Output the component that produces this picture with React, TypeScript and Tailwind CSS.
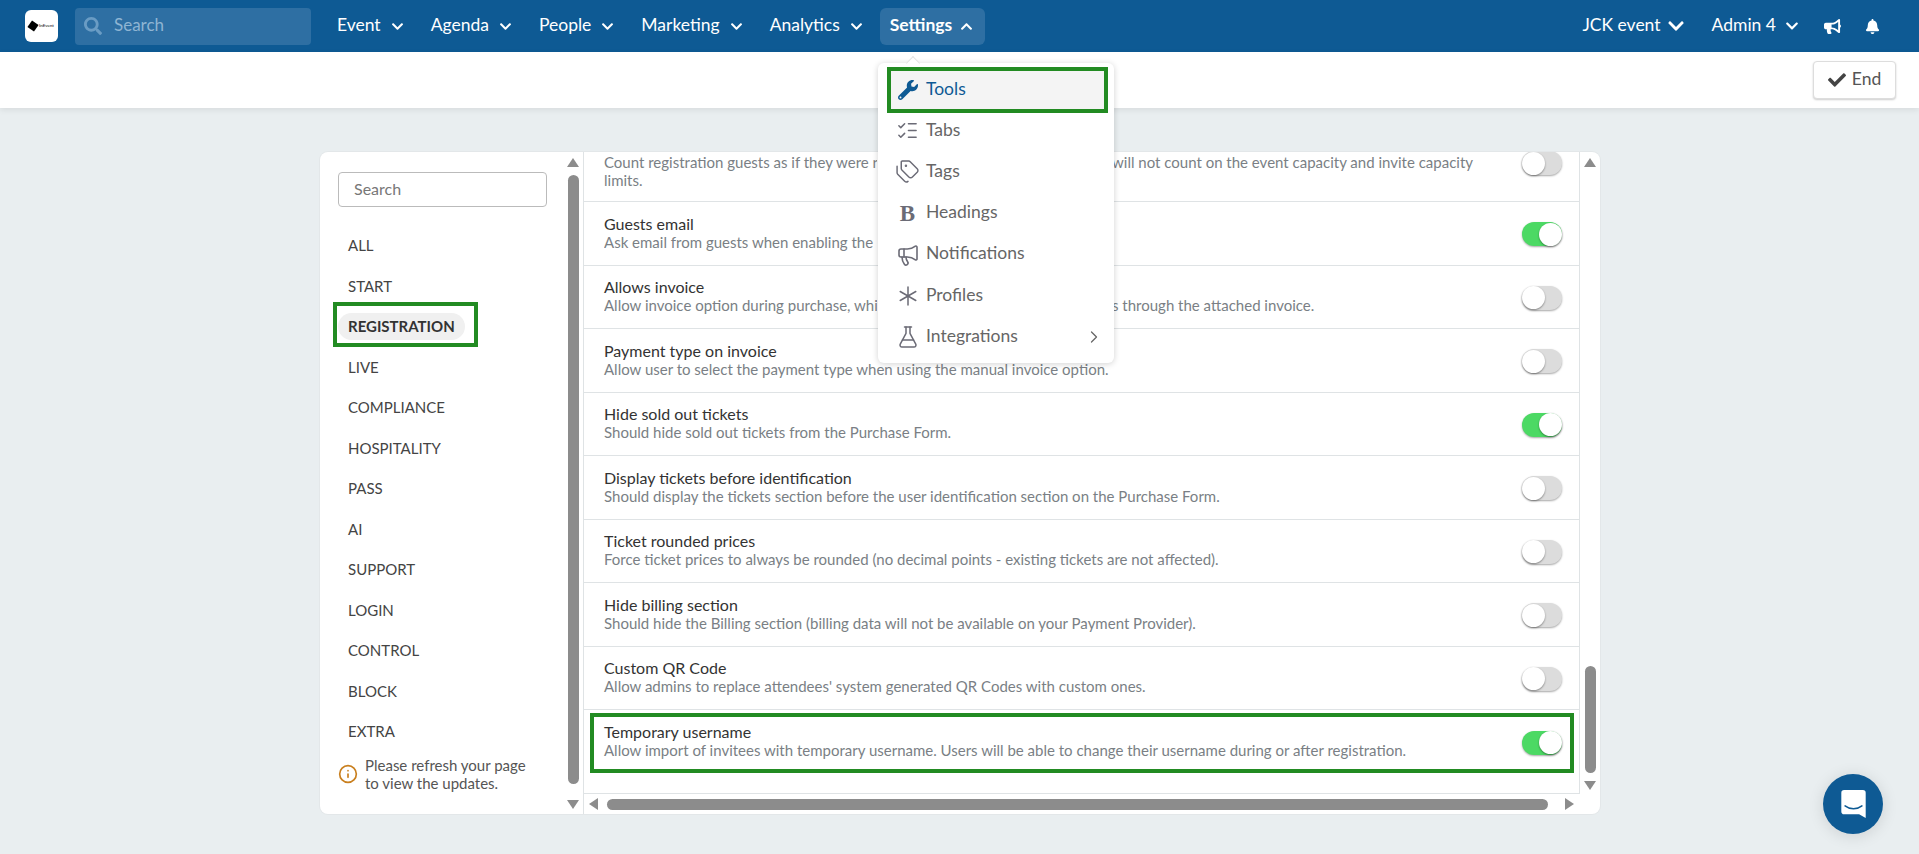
import { ChevronRight, ListChecks, Tags, Megaphone, FlaskConical, Info } from 'lucide-react';
import { FaBell, FaBullhorn, FaCheck, FaChevronDown, FaChevronUp, FaSearch, FaWrench } from 'react-icons/fa';

const navItems = ['Event', 'Agenda', 'People', 'Marketing', 'Analytics'];

const categories = ['ALL', 'START', 'REGISTRATION', 'LIVE', 'COMPLIANCE', 'HOSPITALITY', 'PASS', 'AI', 'SUPPORT', 'LOGIN', 'CONTROL', 'BLOCK', 'EXTRA'];

// `after` is the part of a description that shows on the far side of the open menu
const settings = [
  { title: 'Guests email', text: 'Ask email from guests when enabling the', on: true },
  { title: 'Allows invoice', text: 'Allow invoice option during purchase, whi', after: 's through the attached invoice.', on: false },
  { title: 'Payment type on invoice', text: 'Allow user to select the payment type when using the manual invoice option.', on: false, full: true },
  { title: 'Hide sold out tickets', text: 'Should hide sold out tickets from the Purchase Form.', on: true, full: true },
  { title: 'Display tickets before identification', text: 'Should display the tickets section before the user identification section on the Purchase Form.', on: false, full: true },
  { title: 'Ticket rounded prices', text: 'Force ticket prices to always be rounded (no decimal points - existing tickets are not affected).', on: false, full: true },
  { title: 'Hide billing section', text: 'Should hide the Billing section (billing data will not be available on your Payment Provider).', on: false, full: true },
  { title: 'Custom QR Code', text: "Allow admins to replace attendees' system generated QR Codes with custom ones.", on: false, full: true },
  { title: 'Temporary username', text: 'Allow import of invitees with temporary username. Users will be able to change their username during or after registration.', on: true, full: true },
];

const menu = [
  { label: 'Tabs', icon: <ListChecks size={23} strokeWidth={1.6} /> },
  { label: 'Tags', icon: <Tags size={25} strokeWidth={1.4} /> },
  { label: 'Headings', icon: <span className="font-['Liberation_Serif',serif] text-[23px] font-bold leading-none">B</span> },
  { label: 'Notifications', icon: <Megaphone size={24} strokeWidth={1.6} /> },
  {
    label: 'Profiles',
    icon: (
      <svg viewBox="0 0 20 20" className="h-5 w-5 stroke-current" strokeWidth="1.5" strokeLinecap="round">
        <path d="M10 1v18M2.2 5.5l15.6 9M17.8 5.5l-15.6 9" />
      </svg>
    ),
  },
  { label: 'Integrations', icon: <FlaskConical size={24} strokeWidth={1.5} /> },
];

function Toggle({ on }: { on: boolean }) {
  return (
    <div className={`flex h-[24px] w-[40px] items-center rounded-full shadow-[0_1px_2px_rgba(0,0,0,0.35)] ${on ? 'justify-end bg-[#4cd964]' : 'justify-start bg-[#dcdcdc]'}`}>
      <div className="h-[23px] w-[23px] rounded-full bg-white shadow-[0_1px_2px_rgba(0,0,0,0.4)]" />
    </div>
  );
}

function Triangle({ dir }: { dir: 'up' | 'down' | 'left' | 'right' }) {
  const points = { up: '6,0 12,9 0,9', down: '0,0 12,0 6,9', left: '9,0 9,12 0,6', right: '0,0 9,6 0,12' }[dir];
  const box = dir === 'up' || dir === 'down' ? 'w-3 h-[9px]' : 'w-[9px] h-3';
  return (
    <svg viewBox={dir === 'up' || dir === 'down' ? '0 0 12 9' : '0 0 9 12'} className={`${box} shrink-0 fill-[#8c8c8c]`}>
      <polygon points={points} />
    </svg>
  );
}

function SplitText({ text, after }: { text: string; after?: string }) {
  return (
    <div className="flex text-[15px] leading-[18px] text-[#7a7f85]">
      <span className="w-[273px] overflow-hidden whitespace-nowrap">{text}</span>
      {after && <span className="ml-[235px] whitespace-nowrap">{after}</span>}
    </div>
  );
}

export default function App() {
  return (
    <div className="relative h-[854px] w-[1919px] overflow-hidden bg-[#e9eef0] font-['Lato','Noto_Sans',sans-serif] text-[#333]">
      {/* top bar */}
      <header className="flex h-[52px] items-center bg-[#0e5a94] pl-[25px] pr-[39px] text-white">
        <div className="flex h-8 w-[33px] items-center justify-center gap-[2px] rounded-md bg-white text-black">
          <div className="h-[8px] w-[8px] rotate-[35deg] bg-black" />
          <span className="text-[4.5px] leading-none">InEvent</span>
        </div>
        <div className="ml-[17px] flex h-[37px] w-[236px] items-center rounded bg-[#2e6fa3] pl-[9px] text-[#8fb5d3]">
          <FaSearch size={18} className="text-[#6a9cc4]" />
          <span className="ml-[12px] pb-[2px] text-[17px]">Search</span>
        </div>
        <nav className="ml-[26px] flex items-center text-[17.5px]">
          {navItems.map((item) => (
            <div key={item} className="mr-[27px] flex h-[37px] items-center gap-[10px]">
              <span className="pb-[2px]">{item}</span>
              <FaChevronDown size={13} />
            </div>
          ))}
          <div className="-ml-[10px] flex h-[37px] w-[105px] items-center gap-[8px] rounded-md bg-[#2e6fa3] pl-[10px] font-bold">
            <span className="pb-[2px]">Settings</span>
            <FaChevronUp size={13} />
          </div>
        </nav>
        <div className="ml-auto flex items-center text-[17.5px]">
          <span className="pb-[2px]">JCK event</span>
          <FaChevronDown size={18} className="ml-[6px]" />
          <span className="ml-[27px] pb-[2px]">Admin 4</span>
          <FaChevronDown size={14} className="ml-[9px]" />
          <FaBullhorn size={17} className="ml-[25px]" />
          <FaBell size={15} className="ml-[24px]" />
        </div>
      </header>

      {/* action bar */}
      <div className="flex h-[56px] items-center justify-end bg-white pr-[23px] shadow-[0_2px_6px_rgba(0,0,0,0.08)]">
        <button className="flex h-[38px] w-[83px] items-center justify-center gap-[6px] rounded border border-[#ddd] bg-white text-[17.5px] text-[#555] shadow-[0_1px_2px_rgba(0,0,0,0.2)]">
          <FaCheck size={18} className="text-[#444]" />
          <span className="pb-[2px]">End</span>
        </button>
      </div>

      {/* settings panel */}
      <div className="ml-[320px] mt-[44px] flex h-[662px] w-[1280px] rounded-lg bg-white shadow-[0_0_0_1px_#e3e7e9]">
        <aside className="relative flex w-[264px] shrink-0 border-r border-[#dfe3e5]">
          <div className="w-[247px] pl-[18px] pt-5">
            <div className="flex h-[35px] w-[209px] items-center rounded border border-[#bbb] pb-[2px] pl-[15px] text-[16px] text-[#777]">Search</div>
            <ul className="mt-[18px] text-[15px] text-[#444]">
              {categories.map((c) => (
                <li key={c} className="flex h-[40.5px] items-center">
                  <span className={`flex h-[27px] items-center rounded-full px-[10px] ${c === 'REGISTRATION' ? 'bg-[#f0f0f0] font-bold text-[#333]' : ''}`}>{c}</span>
                </li>
              ))}
            </ul>
            <div className="mt-[4px] flex items-center gap-[7px] text-[15px] leading-[18px] text-[#555]">
              <Info size={20} strokeWidth={2} className="text-[#c97f1e]" />
              <p>Please refresh your page<br />to view the updates.</p>
            </div>
          </div>
          <div className="flex w-3 flex-col items-center pt-[6px] pb-[5px]">
            <Triangle dir="up" />
            <div className="mt-[8px] w-[11px] flex-1 rounded-full bg-[#8c8c8c]" />
            <div className="h-[16px]" />
            <Triangle dir="down" />
          </div>
          {/* highlight around REGISTRATION */}
          <div className="absolute left-[13px] top-[150px] h-[45px] w-[145px] border-4 border-[#228b22]" />
        </aside>

        <div className="flex min-w-0 flex-1 flex-col">
          <div className="flex min-h-0 flex-1">
            <div className="min-w-0 flex-1 overflow-hidden border-r border-b border-[#dfe3e5]">
              <div className="flex h-[50px] items-start justify-between overflow-hidden border-b border-[#dfe3e5] pl-5 pr-[17px]">
                <div className="pt-[1px]">
                  <SplitText text="Count registration guests as if they were r" after="will not count on the event capacity and invite capacity" />
                  <SplitText text="limits." />
                </div>
                <div className="-mt-[1px]"><Toggle on={false} /></div>
              </div>
              {settings.map((s) => (
                <div key={s.title} className="relative flex h-[63.5px] items-center justify-between border-b border-[#dfe3e5] pl-5 pr-[17px] last:border-b-0">
                  <div className="pb-[2px]">
                    <div className="text-[16px] leading-[19px] text-[#333]">{s.title}</div>
                    {s.full ? (
                      <div className="text-[15px] leading-[18px] text-[#7a7f85]">{s.text}</div>
                    ) : (
                      <SplitText text={s.text} after={s.after} />
                    )}
                  </div>
                  <div className="mt-[2px]"><Toggle on={s.on} /></div>
                  {s.title === 'Temporary username' && (
                    <div className="absolute left-[6px] right-[5px] top-[3px] h-[60px] border-4 border-[#228b22]" />
                  )}
                </div>
              ))}
            </div>
            <div className="flex w-[20px] shrink-0 flex-col items-center pt-[6px] pb-[4px]">
              <Triangle dir="up" />
              <div className="flex-1" />
              <div className="h-[107px] w-[11px] rounded-full bg-[#8c8c8c]" />
              <div className="mt-2"><Triangle dir="down" /></div>
            </div>
          </div>
          <div className="flex h-[20px] shrink-0 items-center pl-[5px] pr-[26px]">
            <Triangle dir="left" />
            <div className="ml-[9px] h-[11px] w-[941px] rounded-full bg-[#8c8c8c]" />
            <div className="flex-1" />
            <Triangle dir="right" />
          </div>
        </div>
      </div>

      {/* settings dropdown */}
      <div className="absolute left-[878px] top-[63px] h-[300px] w-[236px] rounded-md bg-white pl-[9px] pr-[6px] pt-[4px] text-[17.5px] text-[#666] shadow-[0_1px_6px_rgba(0,0,0,0.18)]">
        <div className="absolute -top-[5px] left-[30px] h-[10px] w-[10px] rotate-45 border-l border-t border-[#e3e3e3] bg-white" />
        <div className="relative -mb-[3px] flex h-[46px] items-center border-4 border-[#228b22] bg-[#f4f4f4] pl-[4px] text-[#0e5a94]">
          <span className="flex w-[25px] justify-center"><FaWrench size={20} /></span>
          <span className="ml-[6px] pb-[2px]">Tools</span>
        </div>
        {menu.map((m) => (
          <div key={m.label} className="flex h-[41.3px] items-center pl-[8px]">
            <span className="flex w-[25px] justify-center text-[#6b6b76]">{m.icon}</span>
            <span className="ml-[6px] pb-[2px]">{m.label}</span>
            {m.label === 'Integrations' && <ChevronRight size={20} strokeWidth={1.5} className="ml-auto mr-[4px]" />}
          </div>
        ))}
      </div>

      {/* chat launcher */}
      <div className="absolute left-[1823px] top-[774px] flex h-[60px] w-[60px] items-center justify-center rounded-full bg-[#0e5a94] shadow-[0_2px_16px_rgba(0,0,0,0.12)]">
        <svg viewBox="0 0 28 32" className="h-[30px] w-[27px]">
          <path d="M4 1h20a3 3 0 0 1 3 3v27l-7-4H4a3 3 0 0 1-3-3V4a3 3 0 0 1 3-3z" fill="#fff" />
          <path d="M5 18c5 4 13 4 18 0" fill="none" stroke="#0e5a94" strokeWidth="1.6" strokeLinecap="round" />
        </svg>
      </div>
    </div>
  );
}
